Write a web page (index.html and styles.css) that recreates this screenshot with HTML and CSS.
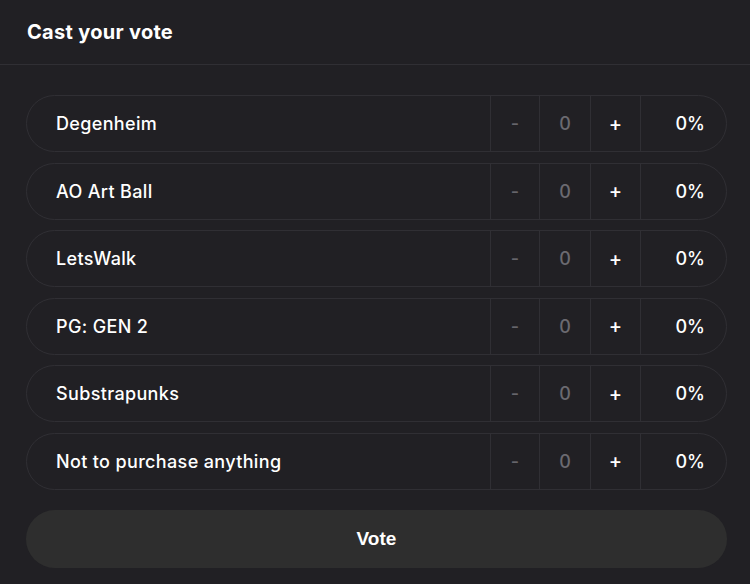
FILE: index.html
```html
<!DOCTYPE html>
<html>
<head>
<meta charset="utf-8">
<link rel="stylesheet" href="styles.css">
</head>
<body>
<div class="panel">
  <div class="header">Cast your vote</div>
  <div class="body">
    <div class="options">
      <div class="row"><div class="name">Degenheim</div><div class="cell minus">-</div><div class="cell count">0</div><div class="cell plus">+</div><div class="pct">0%</div></div>
      <div class="row"><div class="name">AO Art Ball</div><div class="cell minus">-</div><div class="cell count">0</div><div class="cell plus">+</div><div class="pct">0%</div></div>
      <div class="row"><div class="name">LetsWalk</div><div class="cell minus">-</div><div class="cell count">0</div><div class="cell plus">+</div><div class="pct">0%</div></div>
      <div class="row"><div class="name">PG: GEN 2</div><div class="cell minus">-</div><div class="cell count">0</div><div class="cell plus">+</div><div class="pct">0%</div></div>
      <div class="row"><div class="name">Substrapunks</div><div class="cell minus">-</div><div class="cell count">0</div><div class="cell plus">+</div><div class="pct">0%</div></div>
      <div class="row"><div class="name">Not to purchase anything</div><div class="cell minus">-</div><div class="cell count">0</div><div class="cell plus">+</div><div class="pct">0%</div></div>
    </div>
    <button class="vote">Vote</button>
  </div>
</div>
</body>
</html>
```
FILE: styles.css
```css
html, body {
  margin: 0;
  padding: 0;
  background: #212024;
}
.panel {
  width: 750px;
  height: 584px;
  background: #212024;
  color: #ffffff;
  font-family: Inter, "Noto Sans", sans-serif;
}
.header {
  height: 65px;
  box-sizing: border-box;
  border-bottom: 1px solid #302f34;
  padding-left: 27px;
  padding-bottom: 1px;
  display: flex;
  align-items: center;
  font-size: 20px;
  font-weight: 700;
  letter-spacing: 0.3px;
}
.body {
  padding: 30px 23px 0 26px;
}
.options {
  display: flex;
  flex-direction: column;
  gap: 10.5px;
}
.row {
  height: 57px;
  box-sizing: border-box;
  border: 1px solid #302f34;
  border-radius: 29px;
  display: flex;
  align-items: stretch;
  font-size: 18px;
  font-weight: 500;
}
.name {
  flex: 1;
  display: flex;
  align-items: center;
  padding-left: 29px;
  letter-spacing: 0.35px;
}
.cell {
  flex: none;
  box-sizing: border-box;
  display: flex;
  align-items: center;
  justify-content: center;
  border-left: 1px solid #302f34;
}
.minus { width: 49px; color: #66656b; }
.count { width: 51px; color: #6b6a70; }
.plus { width: 50px; color: #ffffff; font-size: 20px; }
.pct {
  flex: none;
  width: 86px;
  box-sizing: border-box;
  border-left: 1px solid #302f34;
  display: flex;
  align-items: center;
  justify-content: flex-end;
  padding-right: 21px;
  font-weight: 500;
}
.vote {
  display: block;
  width: 701px;
  height: 58px;
  margin-top: 20px;
  border: none;
  border-radius: 29px;
  background: #2e2e2e;
  color: #ffffff;
  font-family: "Liberation Sans", Arial, sans-serif;
  font-size: 19px;
  font-weight: 700;
}
```
